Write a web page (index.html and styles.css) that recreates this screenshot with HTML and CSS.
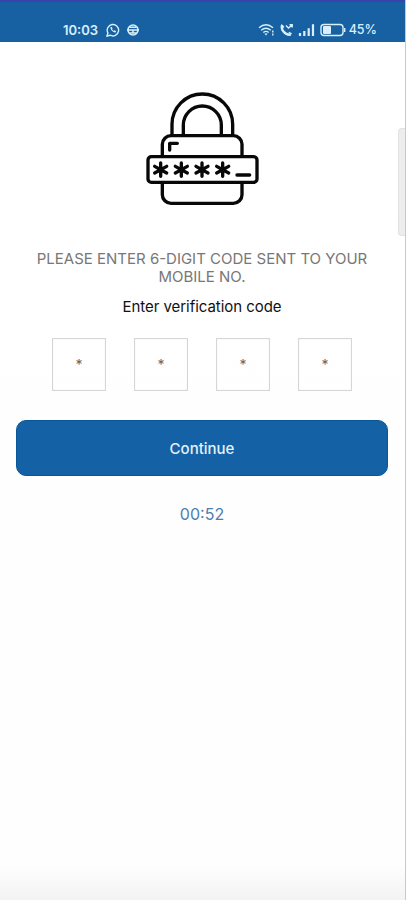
FILE: index.html
```html
<!DOCTYPE html>
<html lang="en">
<head>
<meta charset="utf-8">
<title>Verification code</title>
<link rel="stylesheet" href="styles.css">
</head>
<body>
<div class="screen">
  <header class="status">
    <div class="status-left">
      <span class="time">10:03</span>
      <svg class="chat" viewBox="0 0 14 14"><path d="M1 13l.9-3.1A5.7 5.7 0 1 1 4.200 12.200Z"/><path d="M4.600 4.100c-.7 2.300 2.700 6 5 5.300l.5-1.300-1.700-.8-.8.7-1.600-1.700.6-.8-.8-1.600Z" class="fill"/></svg>
      <svg class="globe" viewBox="0 0 14 14"><circle cx="7" cy="7" r="5"/><path d="M1 7h12M3.500 4.200h7M3.500 10h7M7 7v3"/></svg>
    </div>
    <div class="status-right">
      <svg class="wifi" viewBox="0 0 18 14"><path d="M1 4.800Q8 -1.200 15 4.800M3.200 7.200Q8 3.200 12.800 7.200M5.300 9.500Q8 7.300 10.700 9.500"/><path class="fill" d="M6.300 10.500h3.400L8 12.500Z"/><path d="M14.800 7.500v2M14.800 10.500v2"/></svg>
      <svg class="call" viewBox="0 0 14 14"><path d="M2.300 1.700C.2 6.500 5.200 12.600 10.800 11.600" class="bold"/><path d="M2 2.600l2 2M8.800 9.400l2.800 1.500M6 2.500l2.500 2.500L12 2M9.500 1.800h2.700V4.500"/></svg>
      <svg class="signal" viewBox="0 0 18 14"><path d="M2 10v3M6.300 8v5M10.700 5.300V13M15 1.300V13"/></svg>
      <svg class="battery" viewBox="0 0 26 14"><rect x="1" y="1.500" width="22" height="11" rx="3"/><path d="M24.700 5v4"/><rect class="fill" x="3" y="3" width="8" height="8" rx="1"/></svg>
      <span class="percent">45%</span>
    </div>
  </header>
  <main>
    <svg class="lock" viewBox="0 0 405 405">
      <path d="M108 163V130a91 91 0 0 1 182 0v33M142 163v-31a57 57 0 0 1 114 0v31"/>
      <path d="M79 224v-34a26 26 0 0 1 26-26h187a26 26 0 0 1 26 26v34M79 307v34a26 26 0 0 0 26 26h187a26 26 0 0 0 26-26v-34"/>
      <rect x="36" y="227" width="327" height="77" rx="10"/>
      <path d="M101 207V187h23M303 282h38"/>
      <g class="stars"><path id="star" d="M74 246v40M56 256l36 20M56 276l36-20"/><use href="#star" x="62"/><use href="#star" x="124"/><use href="#star" x="186"/></g>
    </svg>
    <p class="notice">PLEASE ENTER 6-DIGIT CODE SENT TO YOUR<br>MOBILE NO.</p>
    <p class="label">Enter verification code</p>
    <div class="code"><span>*</span><span>*</span><span>*</span><span>*</span></div>
    <button class="continue">Continue</button>
    <p class="timer">00:52</p>
  </main>
  <div class="edge-handle"></div>
</div>
</body>
</html>
```
FILE: styles.css
```css
* { box-sizing: border-box; }
body { margin: 0; font-family: Inter, "Liberation Sans", sans-serif; }
.screen {
  position: relative;
  height: 900px;
  overflow: hidden;
  border-right: 1px solid #c9c9c9;
  background: linear-gradient(#fff 0, #fefefe 865px, #f3f3f3 900px);
}
.status {
  display: flex;
  justify-content: space-between;
  height: 42px;
  padding: 18px 28px 0 63px;
  border-top: 2px solid #3b42ad;
  background: #1761a2;
  color: #d9effa;
}
.status-left, .status-right { display: flex; align-items: center; height: 20px; }
.time { width: 43px; font: 600 13px/20px Inter, sans-serif; white-space: nowrap; }
.percent { font: 500 12.5px/20px Inter, sans-serif; }
svg { flex: none; fill: none; stroke: currentColor; stroke-width: 1.4; }
.chat, .globe, .call { width: 14px; height: 14px; }
.globe { margin-left: 6px; stroke-width: 1.6; }
.wifi { width: 18px; height: 14px; }
.call { margin-left: 4px; }
.signal { width: 18px; height: 14px; margin-left: 4px; stroke-width: 2.2; }
.battery { width: 26px; height: 14px; margin: 0 3px 0 4px; }
.fill { fill: currentColor; stroke: none; }
.bold { stroke-width: 2.4; }
main { display: flex; flex-direction: column; align-items: center; padding: 39px 17px 0 16px; }
p { margin: 0; }
.lock { width: 135px; height: 135px; margin-left: 2px; color: #080808; stroke-width: 10; stroke-linecap: round; stroke-linejoin: round; }
.stars { stroke-width: 10; }
.notice { margin-top: 34px; color: #777; font-size: 15px; line-height: 18px; text-align: center; white-space: nowrap; }
.label { margin-top: 11px; color: #111; font-size: 15px; line-height: 20px; letter-spacing: -0.04px; }
.code { display: flex; gap: 28px; margin-top: 21px; }
.code span {
  width: 54px;
  height: 53px;
  border: 1.5px solid #d5d7d7;
  box-shadow: inset 0 0 1px #d5d7d7;
  color: #666;
  font-size: 14px;
  line-height: 52px;
  text-align: center;
}
.continue {
  width: 372px;
  height: 56px;
  margin-top: 29px;
  padding-top: 2px;
  border: 1px solid #075799;
  border-radius: 10px;
  background: #1561a5;
  color: #e3f1fa;
  font: 500 15px/20px Inter, sans-serif;
}
.timer { margin-top: 28px; color: #4c7eae; font-size: 16px; line-height: 20px; }
.edge-handle {
  position: absolute;
  top: 128px;
  right: 0;
  width: 7px;
  height: 108px;
  border: 1px solid #e2e2e2;
  border-right: 0;
  border-radius: 4px 0 0 4px;
  background: #ededed;
}
```
